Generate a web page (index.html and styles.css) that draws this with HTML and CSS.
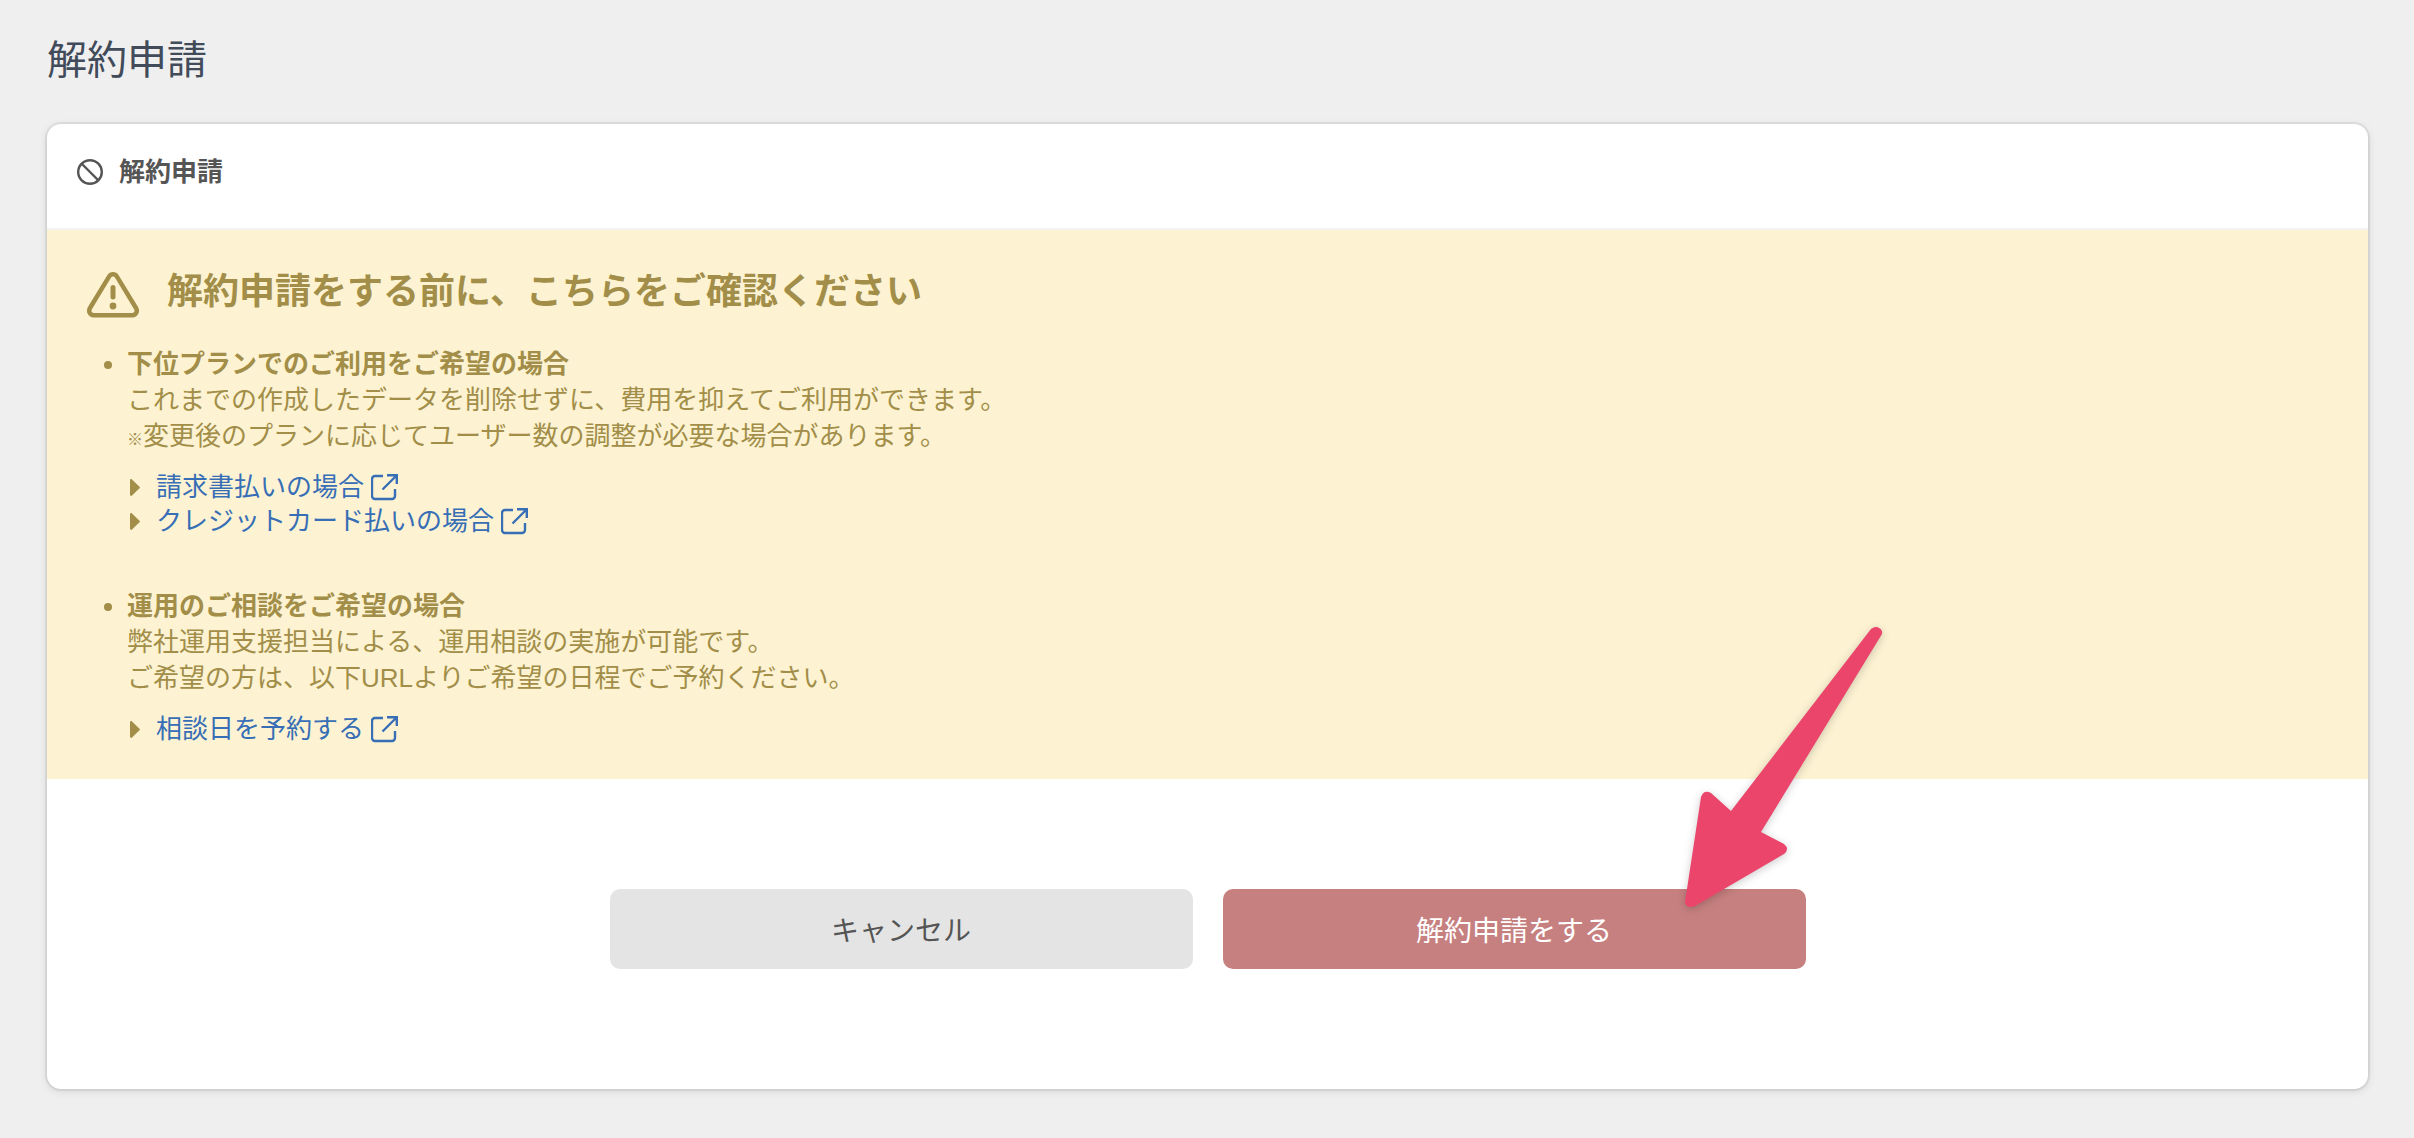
FILE: index.html
```
<!DOCTYPE html>
<html lang="ja">
  <head>
    <meta charset="utf-8">
    <meta name="viewport" content="width=device-width, initial-scale=1.0">
    <title>解約申請</title>
    <link rel="stylesheet" href="styles.css">
  </head>
  <body>
    <!-- shared icons -->
    <svg class="icon-defs" aria-hidden="true">
      <symbol id="icon-external" viewBox="0 0 27 27">
        <path d="M12 2H4a3 3 0 0 0-3 3v17a3 3 0 0 0 3 3h17a3 3 0 0 0 3-3v-7" />
        <path d="M16 1.2h9.8V10M25.5 1.5 11.5 15.5" />
      </symbol>
      <symbol id="icon-caret" viewBox="0 0 10 17">
        <path d="M0 1.2C0 .2 1.2-.3 2 .4l7.5 7.3c.5.5.5 1.1 0 1.6L2 16.6c-.8.7-2 .2-2-.8z" />
      </symbol>
    </svg>

    <main class="page">
      <h1 class="page-title">解約申請</h1>

      <section class="card">
        <header class="card-header">
          <svg class="icon-ban" viewBox="0 0 26 26" aria-hidden="true">
            <circle cx="13" cy="13" r="11.8" />
            <path d="M4.5 4.5l17 17" />
          </svg>
          <h2 class="card-title">解約申請</h2>
        </header>

        <div class="alert">
          <div class="alert-heading">
            <svg class="icon-warning" viewBox="0 0 52 46" aria-hidden="true">
              <path d="M22.2 4.4a4.5 4.5 0 0 1 7.6 0l19.2 31.6c1.9 3.2.1 7.2-3.6 7.2H6.6c-3.7 0-5.5-4-3.6-7.2z" />
              <path class="mark" d="M26 15.5v9.5" />
              <circle cx="26" cy="34" r="3.4" />
            </svg>
            <h3 class="alert-title">解約申請をする前に、こちらをご確認ください</h3>
          </div>

          <ul class="notes">
            <li class="note">
              <div>
                <strong>下位プランでのご利用をご希望の場合</strong>
                <p>これまでの作成したデータを削除せずに、費用を抑えてご利用ができます。<br><small>※</small>変更後のプランに応じてユーザー数の調整が必要な場合があります。</p>
                <ul class="links">
                  <li>
                    <svg class="icon-caret" aria-hidden="true"><use href="#icon-caret" /></svg>
                    <a href="#invoice">請求書払いの場合<svg class="icon-external" aria-hidden="true"><use href="#icon-external" /></svg></a>
                  </li>
                  <li>
                    <svg class="icon-caret" aria-hidden="true"><use href="#icon-caret" /></svg>
                    <a href="#card">クレジットカード払いの場合<svg class="icon-external" aria-hidden="true"><use href="#icon-external" /></svg></a>
                  </li>
                </ul>
              </div>
            </li>
            <li class="note">
              <div>
                <strong>運用のご相談をご希望の場合</strong>
                <p>弊社運用支援担当による、運用相談の実施が可能です。<br>ご希望の方は、以下URLよりご希望の日程でご予約ください。</p>
                <ul class="links">
                  <li>
                    <svg class="icon-caret" aria-hidden="true"><use href="#icon-caret" /></svg>
                    <a href="#reserve">相談日を予約する<svg class="icon-external" aria-hidden="true"><use href="#icon-external" /></svg></a>
                  </li>
                </ul>
              </div>
            </li>
          </ul>
        </div>

        <div class="actions">
          <button type="button" class="btn btn-cancel">キャンセル</button>
          <div class="submit-wrap">
            <button type="button" class="btn btn-submit">解約申請をする</button>
            <svg class="pointer" viewBox="0 0 230 310" aria-hidden="true">
              <path d="M201 19Q204 16.500 207 17Q213 19 212 24L91 222L114 234Q120 239 114 244L25 296Q16 299 15 292L31 187Q34 179 41 183L61 201Z" />
            </svg>
          </div>
        </div>
      </section>
    </main>
  </body>
</html>
```

FILE: styles.css
```
* {
  box-sizing: border-box;
}

body {
  margin: 0;
  background: #efefef;
  color: #555;
  font-family: "Liberation Sans", "Noto Sans CJK JP", sans-serif;
  font-size: 26px;
  line-height: 36px;
}

h1, h2, h3, p, ul {
  margin: 0;
  padding: 0;
}

ul {
  list-style: none;
}

.icon-defs {
  display: none;
}

.page {
  padding: 30px 46px 49px 47px;
}

.page-title {
  margin-bottom: 34px;
  color: #414b5a;
  font-size: 40px;
  font-weight: normal;
  line-height: 60px;
}

/* card */
.card {
  background: #fff;
  border-radius: 14px;
  box-shadow: 0 0 0 2px rgba(0, 0, 0, 0.06), 0 2px 8px rgba(0, 0, 0, 0.12);
}

.card-header {
  display: flex;
  align-items: center;
  gap: 16px;
  padding: 30px 30px 38px;
  border-bottom: 2px solid #f3f3f3;
}

.card-title {
  font-size: 26px;
}

.icon-ban {
  width: 26px;
  height: 26px;
  fill: none;
  stroke: #555;
  stroke-width: 2.4;
}

/* warning */
.alert {
  padding: 36px 40px 33px;
  background: #fdf3d3;
  color: #a28e48;
}

.alert-heading {
  display: flex;
  align-items: flex-end;
  gap: 28px;
  margin-bottom: 28px;
}

.alert-title {
  font-size: 36px;
  line-height: 52px;
}

.icon-warning {
  flex: none;
  width: 52px;
  height: 46px;
  fill: none;
  stroke: #a28e48;
  stroke-width: 4.5;
}

.icon-warning .mark {
  stroke-width: 5;
  stroke-linecap: round;
}

.icon-warning circle {
  fill: #a28e48;
  stroke: none;
}

.notes {
  display: flex;
  flex-direction: column;
  gap: 50px;
  padding-left: 17px;
}

.note {
  display: flex;
  gap: 15px;
}

.note::before {
  content: "";
  flex: none;
  width: 8px;
  height: 8px;
  margin-top: 15px;
  border-radius: 50%;
  background: #a28e48;
}

.note small {
  font-size: 16px;
  font-weight: bold;
  line-height: 1;
}

.links {
  margin-top: 16px;
  padding-left: 3px;
  line-height: 34px;
}

.links li {
  display: flex;
  align-items: center;
  gap: 16px;
}

.links a {
  display: flex;
  align-items: center;
  gap: 7px;
  color: #376eb5;
  text-decoration: none;
}

.links a:hover {
  text-decoration: underline;
}

.icon-caret {
  width: 10px;
  height: 17px;
  fill: #a28e48;
}

.icon-external {
  width: 27px;
  height: 27px;
  fill: none;
  stroke: #376eb5;
  stroke-width: 2.4;
}

/* buttons */
.actions {
  display: grid;
  grid-template-columns: 1fr 1fr;
  gap: 30px;
  max-width: 1196px;
  margin: 0 auto;
  padding: 110px 0 120px;
}

.btn {
  display: block;
  width: 100%;
  height: 80px;
  border: none;
  border-radius: 10px;
  font-family: inherit;
  font-size: 28px;
  cursor: pointer;
}

.btn-cancel {
  background: #e4e4e4;
  color: #555;
}

.btn-submit {
  background: #c6807f;
  color: #fff;
}

.submit-wrap {
  position: relative;
}

/* arrow lies over the submit button */
.pointer {
  position: absolute;
  right: -94px;
  bottom: 49px;
  width: 230px;
  height: 310px;
  fill: #eb456c;
  filter: drop-shadow(0 2px 4px rgba(0, 0, 0, 0.2));
  pointer-events: none;
}
```
